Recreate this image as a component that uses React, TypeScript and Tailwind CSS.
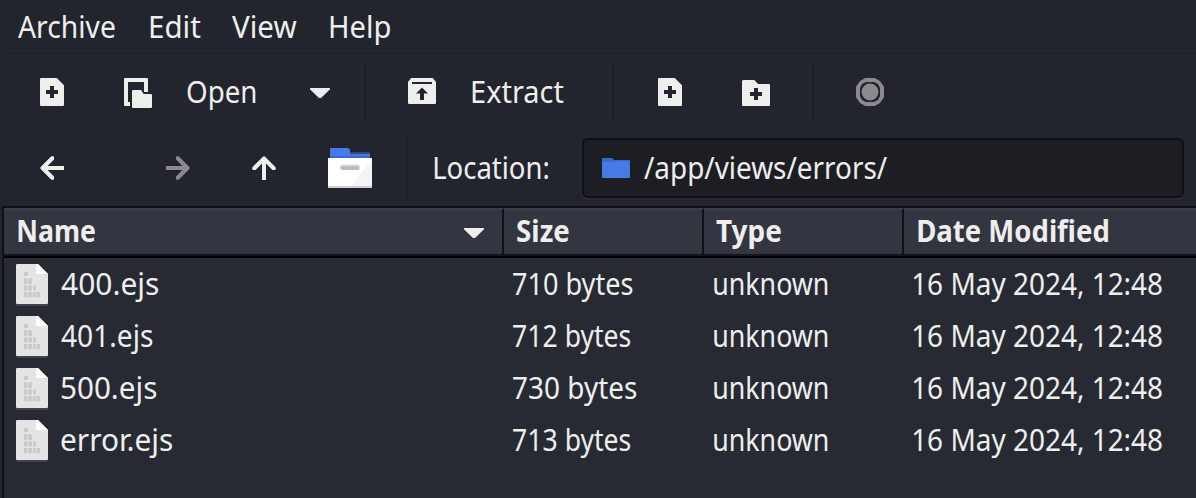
import { useLayoutEffect, useRef, type ReactNode } from "react";

/** Single line of text whose drawn glyphs span exactly `width` pixels. */
function Label({ text, width, bold = false }: { text: string; width: number; bold?: boolean }) {
  const ref = useRef<HTMLSpanElement>(null);
  useLayoutEffect(() => {
    const el = ref.current;
    const ctx = document.createElement("canvas").getContext("2d");
    if (!el || !ctx) return;
    ctx.font = `${bold ? 700 : 400} 30px "Noto Sans"`;
    const m = ctx.measureText(text);
    const scale = width / (m.actualBoundingBoxLeft + m.actualBoundingBoxRight);
    el.style.transform = `translateX(${m.actualBoundingBoxLeft * scale}px) scaleX(${scale})`;
  }, [text, width, bold]);
  return (
    <span
      ref={ref}
      className={`block origin-left whitespace-nowrap text-[30px] leading-10 ${bold ? "font-bold" : "font-normal"}`}
      style={{ width }}
    >
      {text}
    </span>
  );
}

function Glyph({ w, h, className = "", children }: { w: number; h: number; className?: string; children: ReactNode }) {
  return (
    <svg width={w * 2} height={h * 2} viewBox={`0 0 ${w} ${h}`} fill="currentColor" className={`block shrink-0 ${className}`}>
      {children}
    </svg>
  );
}

const NewFileIcon = ({ className }: { className?: string }) => (
  <Glyph w={12} h={14} className={className}>
    <path fillRule="evenodd" d="M.4 0H8.4L12 3.6V13.6L11.6 14H.4L0 13.6V.4ZM5 4V6H3V8H5V10H7V8H9V6H7V4Z" />
  </Glyph>
);

const OpenIcon = ({ className }: { className?: string }) => (
  <Glyph w={14} h={15} className={className}>
    <path d="M.4 0H11.6L12 .4V7H10V2H2V12H3V14H.4L0 13.6V.4Z" />
    <path d="M4 6.4L4.4 6H8.6L9.5 7.6L10 8H13.6L14 8.4V14.6L13.6 15H4.4L4 14.6Z" />
  </Glyph>
);

const ExtractIcon = ({ className }: { className?: string }) => (
  <Glyph w={14} h={13} className={className}>
    <path
      fillRule="evenodd"
      d="M1.6 0H12.4L14 2V12.6L13.6 13H.4L0 12.6V2ZM2 2V3H12V2ZM7 4.8L4 7.8H6V11H8V7.8H10Z"
    />
  </Glyph>
);

const AddFolderIcon = ({ className }: { className?: string }) => (
  <Glyph w={14} h={13} className={className}>
    <path
      fillRule="evenodd"
      d="M.5 0H6.2L8 2H13.6L14 2.4V12.6L13.6 13H.4L0 12.6V.5ZM6 4V6H4V8H6V10H8V8H10V6H8V4Z"
    />
  </Glyph>
);

const StopIcon = ({ className }: { className?: string }) => (
  <Glyph w={14} h={14} className={className}>
    <path
      fillRule="evenodd"
      d="M4.6 0H9.4L12 1.5L14 4.4V9.6L12 12.5L9.4 14H4.6L2 12.5L0 9.6V4.4L2 1.5ZM5 2L3 3L2 5V9L3 11L5 12H9L11 11L12 9V5L11 3L9 2Z"
    />
    <circle cx="7" cy="7" r="4.2" />
  </Glyph>
);

const Triangle = ({ className }: { className?: string }) => (
  <Glyph w={10} h={5} className={className}>
    <path d="M0 0H10V.6L5.8 4.8Q5 5.3 4.2 4.8L0 .6Z" />
  </Glyph>
);

const Arrow = ({ className }: { className?: string }) => (
  <Glyph w={12} h={12} className={className}>
    <path d="M12 5H3.8L7 1.8V.4L6.2 0L5.4 .4L.2 5.6V6.4L5.4 11.6L6.2 12L7 11.6V10.2L3.8 7H12Z" />
  </Glyph>
);

const HomeFolderIcon = ({ className }: { className?: string }) => (
  <Glyph w={22} h={20} className={className}>
    <path fill="#2b4887" d="M11 2H20.6L21 2.4V5H1V4H11Z" />
    <path fill="#477ae6" d="M1 .4L1.4 0H10.2L11 .8V3H21V4.4H1Z" />
    <path fill="#3c68c6" d="M1 4.2H21V5H1Z" />
    <rect y="5" width="22" height="15" fill="#fff" />
    <path fill="#f4f4f4" d="M22 6V19H11.5Z" />
    <rect y="19" width="22" height="1" fill="#cfcfd1" />
    <rect x="6" y="8.2" width="10" height="2.8" rx="1.4" fill="#dcdcdc" />
    <rect x="6.3" y="9" width="9.4" height="2" rx="1" fill="#bcbcbc" />
  </Glyph>
);

const SmallFolderIcon = ({ className }: { className?: string }) => (
  <Glyph w={14} h={10} className={className}>
    <path fill="#3c68c6" d="M0 .3L.3 0H5L6 1H13.7L14 1.3V3H0Z" />
    <path fill="#477ae6" d="M0 2H5L6 1.6H14V9.7L13.7 10H.3L0 9.7Z" />
  </Glyph>
);

const FileIcon = ({ className }: { className?: string }) => (
  <Glyph w={16} h={21} className={className}>
    <path fill="#41444b" d="M0 19H16V20.6L15.6 21H.4L0 20.6Z" />
    <path fill="#e4e4e4" d="M.4 0H11L16 5V19.6L15.6 20H.4L0 19.6V.4Z" />
    <path fill="#fff" d="M10 0H11L16 5H10.5L10 4.5Z" />
    <path
      fill="#cacaca"
      d="M4 4H6V6H4ZM4 7H5.6V10H4ZM6 7.3H8V10H6ZM4 10.6H5.6V13.2H4ZM6 10.6H8V13.2H6ZM8.6 10.6H10V13.2H8.6ZM4 14H5.6V16.6H4ZM6 14H8V16.6H6ZM8.4 14H9.8V16.6H8.4ZM10.2 14H12V16.6H10.2Z"
    />
  </Glyph>
);

const Separator = ({ className = "" }: { className?: string }) => (
  <div className={`h-[60px] w-0.5 shrink-0 bg-[#1f2128] ${className}`} />
);

const menus = [
  { text: "Archive", width: 97, cls: "" },
  { text: "Edit", width: 51, cls: "ml-[35px]" },
  { text: "View", width: 65, cls: "ml-[31px]" },
  { text: "Help", width: 60, cls: "ml-[33px]" },
];

const files = [
  { name: "400.ejs", nameWidth: 98, size: "710 bytes", sizeWidth: 120 },
  { name: "401.ejs", nameWidth: 92, size: "712 bytes", sizeWidth: 118 },
  { name: "500.ejs", nameWidth: 96, size: "730 bytes", sizeWidth: 124 },
  { name: "error.ejs", nameWidth: 112, size: "713 bytes", sizeWidth: 118 },
];

export default function App() {
  return (
    <div className="flex h-[498px] w-[1196px] flex-col overflow-hidden bg-[#23252e] font-['Noto_Sans',sans-serif] text-[#eeeeec]">
      <nav className="ml-0.5 flex h-[54px] shrink-0 border-b-2 border-[#1f2128] pl-4 pt-[7px]">
        {menus.map((m) => (
          <div key={m.text} className={m.cls}>
            <Label text={m.text} width={m.width} />
          </div>
        ))}
      </nav>

      <div className="flex h-[76px] shrink-0 items-center pl-10">
        <NewFileIcon />
        <OpenIcon className="ml-[60px] mt-0.5" />
        <div className="ml-[35px]">
          <Label text="Open" width={69} />
        </div>
        <Triangle className="ml-[54px] mt-0.5" />
        <Separator className="ml-[34px]" />
        <ExtractIcon className="-mt-0.5 ml-[42px]" />
        <div className="ml-9">
          <Label text="Extract" width={92} />
        </div>
        <Separator className="ml-12" />
        <NewFileIcon className="ml-11" />
        <AddFolderIcon className="ml-[60px] mt-0.5" />
        <Separator className="ml-[42px]" />
        <StopIcon className="ml-[42px] text-[#8a8b8f]" />
      </div>

      <div className="flex h-[76px] shrink-0 items-center pl-10">
        <Arrow />
        <Arrow className="ml-[102px] rotate-180 text-[#8a8b8f]" />
        <Arrow className="ml-[62px] rotate-90" />
        <HomeFolderIcon className="ml-[52px]" />
        <Separator className="ml-[34px]" />
        <div className="ml-[26px]">
          <Label text="Location:" width={114} />
        </div>
        <div className="ml-[34px] flex h-[60px] w-[602px] items-center rounded-md border-2 border-[#0f1014] bg-[#1d1e24] pl-[18px] shadow-[0_2px_0_#2a2c35]">
          <SmallFolderIcon />
          <div className="ml-[14px]">
            <Label text="/app/views/errors/" width={243} />
          </div>
        </div>
      </div>

      <main className="ml-0.5 flex min-h-0 flex-1 flex-col border-l-2 border-t-2 border-[#0f1014] bg-[#272a33]">
        <div className="grid h-[50px] shrink-0 grid-cols-[500px_200px_200px_1fr] border-b-2 border-black">
          <div className="flex items-center justify-between border-b-2 border-r-2 border-t-2 border-b-[#15161b] border-r-[#0f1014] border-t-[#3c3d4a] bg-[#333541] pl-[14px] pr-[18px]">
            <div className="-mt-0.5">
              <Label text="Name" width={77} bold />
            </div>
            <Triangle className="mt-0.5" />
          </div>
          <div className="flex items-center border-b-2 border-r-2 border-t-2 border-b-[#15161b] border-r-[#0f1014] border-t-[#3c3d4a] bg-[#333541] pb-0.5 pl-[13px]">
            <Label text="Size" width={52} bold />
          </div>
          <div className="flex items-center border-b-2 border-r-2 border-t-2 border-b-[#15161b] border-r-[#0f1014] border-t-[#3c3d4a] bg-[#333541] pb-0.5 pl-3">
            <Label text="Type" width={65} bold />
          </div>
          <div className="flex items-center border-b-2 border-t-2 border-b-[#15161b] border-t-[#3c3d4a] bg-[#333541] pb-0.5 pl-[14px]">
            <Label text="Date Modified" width={190} bold />
          </div>
        </div>
        {files.map((f) => (
          <div key={f.name} className="grid h-[52px] shrink-0 grid-cols-[508px_200px_200px_1fr] pt-[6px]">
            <div className="flex pl-3">
              <FileIcon />
              <div className="ml-[13px]">
                <Label text={f.name} width={f.nameWidth} />
              </div>
            </div>
            <div className="pl-px">
              <Label text={f.size} width={f.sizeWidth} />
            </div>
            <div className="pl-0.5">
              <Label text="unknown" width={114} />
            </div>
            <div className="pl-px">
              <Label text="16 May 2024, 12:48" width={249} />
            </div>
          </div>
        ))}
      </main>
    </div>
  );
}
